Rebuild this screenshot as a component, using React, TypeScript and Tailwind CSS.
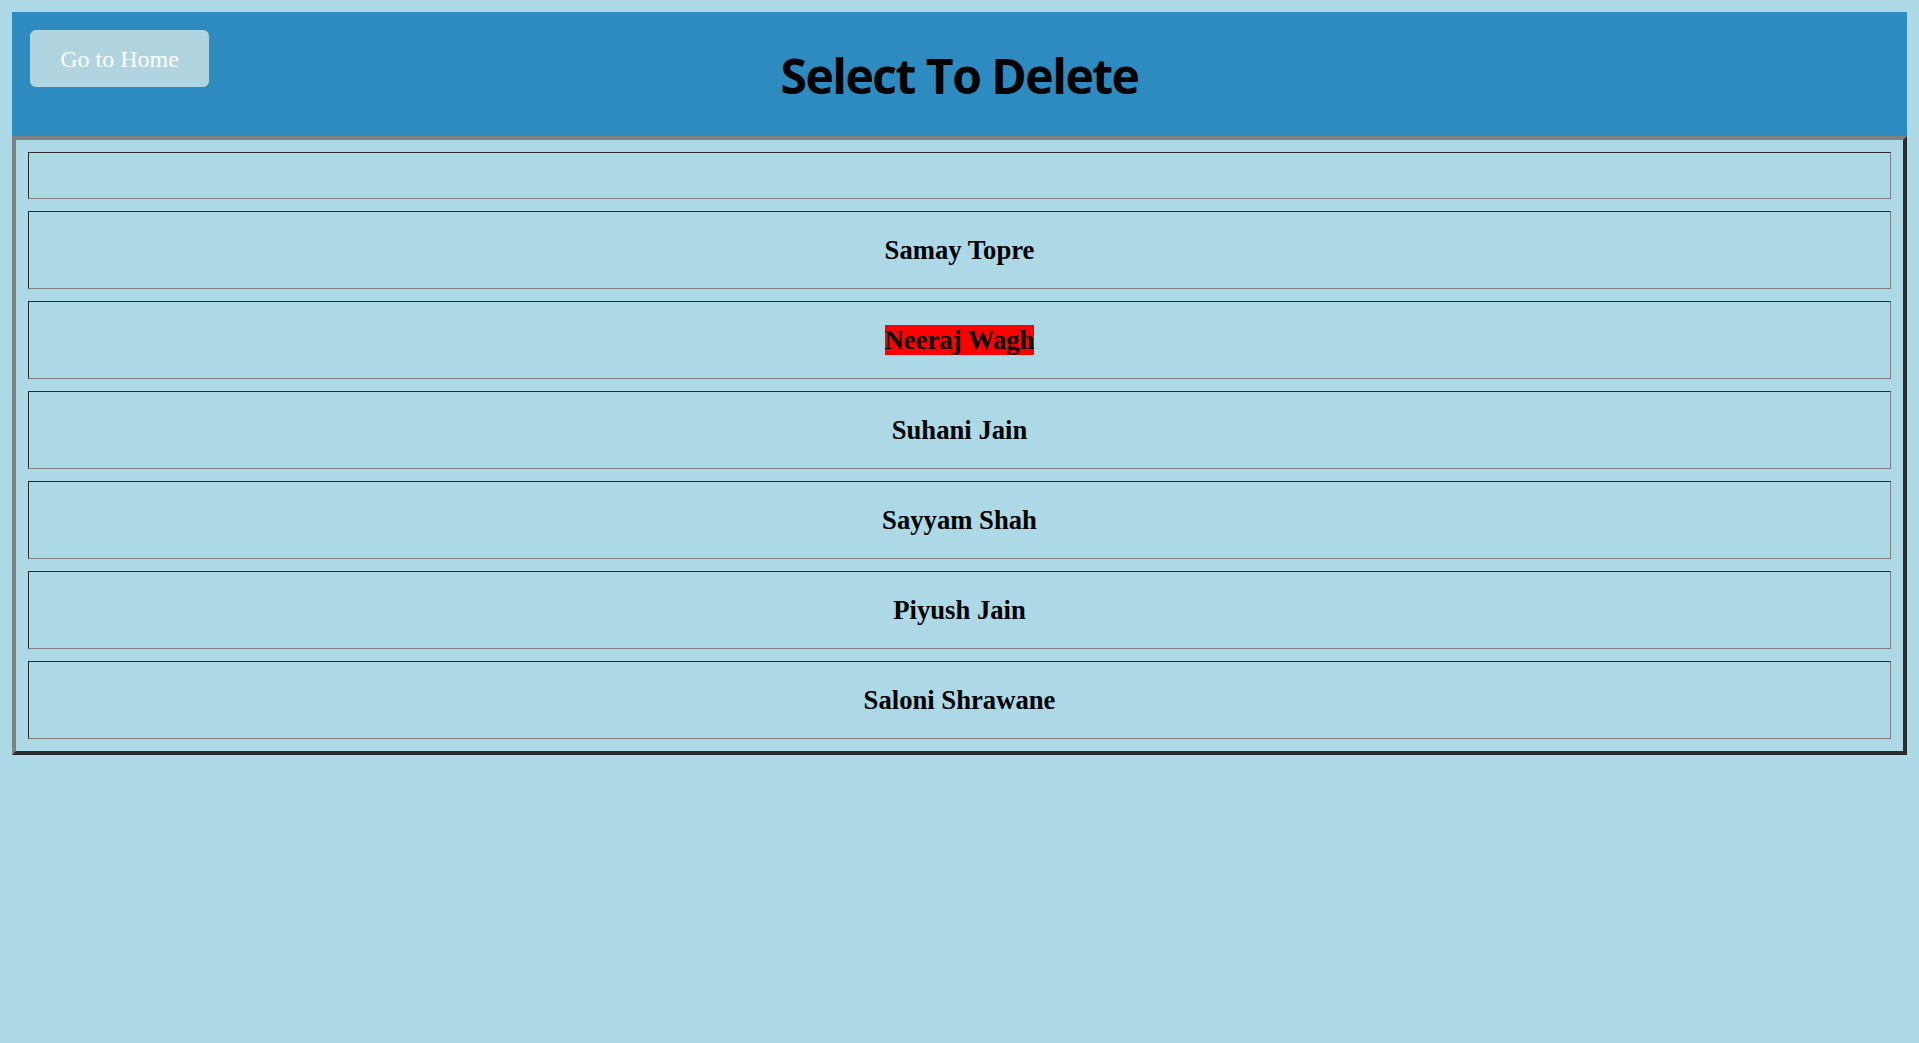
import React from "react";

const NAMES = ["", "Samay Topre", "Neeraj Wagh", "Suhani Jain", "Sayyam Shah", "Piyush Jain", "Saloni Shrawane"];
const SELECTED = "Neeraj Wagh";

export default function App() {
  return (
    <div className="min-h-screen bg-[#add8e6] p-3">
      {/* header */}
      <header className="grid h-[124px] grid-cols-[1fr_auto_1fr] items-start bg-[#2e8bc0] px-[18px] pt-[18px]">
        <button
          type="button"
          className="h-[57px] w-[179px] rounded-md bg-[#b0d4e0] text-[24px] text-white font-['Liberation_Serif',serif]"
        >
          Go to Home
        </button>
        <h1 className="mt-[22px] text-[48px] font-bold leading-none tracking-[-1.5px] text-black font-['Open_Sans',sans-serif]">
          Select To Delete
        </h1>
        <div />
      </header>

      {/* list */}
      <div className="flex flex-col gap-3 border-4 border-t-[#808080] border-l-[#808080] border-b-[#2b2b2b] border-r-[#2b2b2b] p-3">
        {NAMES.map((name, i) => (
          <div
            key={i}
            className={
              "flex items-center justify-center border border-t-[#2b2b2b] border-l-[#2b2b2b] border-b-[#808080] border-r-[#808080] " +
              (name ? "h-[78px]" : "h-[47px]")
            }
          >
            {name && (
              <p className="text-center text-[26.67px] font-bold leading-[1.15] text-black font-['Liberation_Serif',serif]">
                <span className={name === SELECTED ? "bg-[#ff0000]" : ""}>{name}</span>
              </p>
            )}
          </div>
        ))}
      </div>
    </div>
  );
}
